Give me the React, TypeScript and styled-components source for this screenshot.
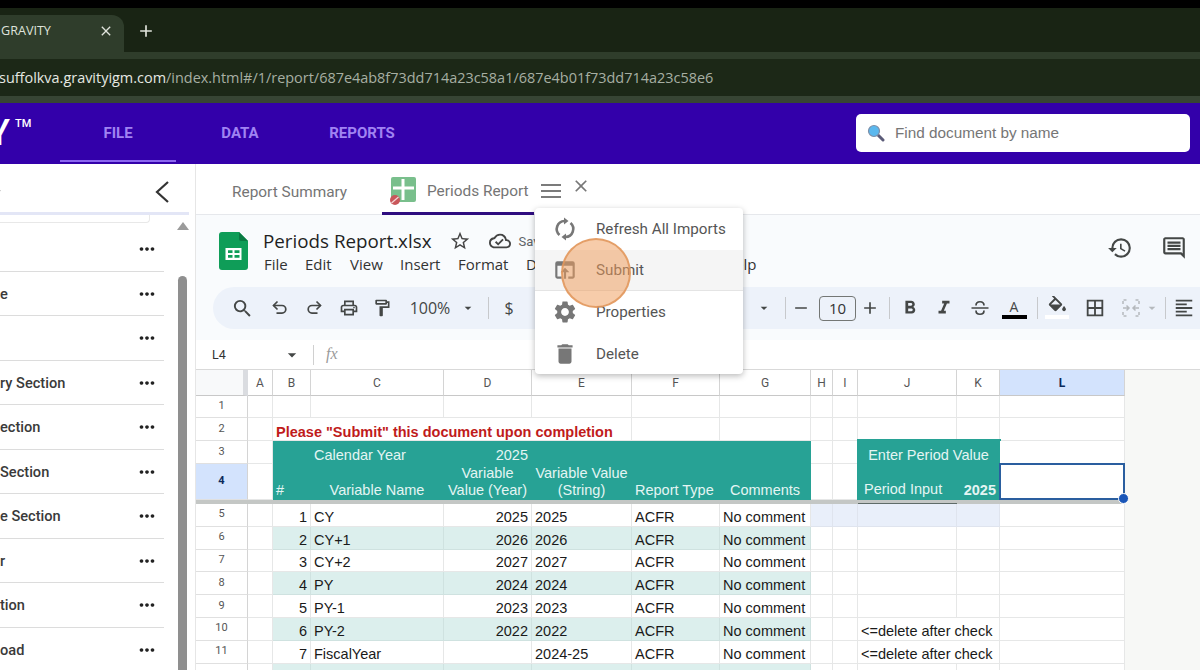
import React from "react";
import styled, { createGlobalStyle } from "styled-components";
import {
  MdArrowDropDown,
  MdAdd,
  MdBorderAll,
  MdClose,
  MdDelete,
  MdFormatAlignLeft,
  MdFormatBold,
  MdFormatItalic,
  MdHistory,
  MdMoreHoriz,
  MdOutlineCloudDone,
  MdOutlineComment,
  MdOutlineFormatPaint,
  MdOutlineLocalPrintshop,
  MdOutlineOpenInBrowser,
  MdRemove,
  MdSearch,
  MdSettings,
  MdStarBorder,
  MdExpandMore,
} from "react-icons/md";

const GlobalStyle = createGlobalStyle`
  html, body { margin: 0; padding: 0; background: #fff; }
  body { font-family: Roboto, "Liberation Sans", sans-serif; }
`;

const Page = styled.div`
  position: relative;
  width: 1200px;
  height: 670px;
  overflow: hidden;
  display: flex;
  flex-direction: column;
`;

/* browser chrome */
const BlackBar = styled.div`
  height: 8px;
  background: #000;
`;

const TabStrip = styled.div`
  height: 44px;
  background: #192414;
  display: flex;
  align-items: flex-end;
  color: #dfe3db;
`;

const BrowserTab = styled.div`
  width: 124px;
  height: 37px;
  background: #2f3d2b;
  border-top-right-radius: 12px;
  display: flex;
  align-items: center;
  justify-content: space-between;
  padding: 0 10px 6px 1px;
  box-sizing: border-box;
  font: 12.6px "Open Sans", sans-serif;
`;

const NewTab = styled.div`
  width: 44px;
  height: 37px;
  padding-bottom: 6px;
  box-sizing: border-box;
  display: flex;
  align-items: center;
  justify-content: center;
`;

const AddressWrap = styled.div`
  height: 51px;
  box-sizing: border-box;
  background: #1c2817;
  border-top: 7px solid #2f3d2b;
  border-bottom: 7px solid #374534;
  display: flex;
  align-items: center;
  overflow: hidden;
  font: 14.45px "Open Sans", sans-serif;
  color: #a7afa3;
  white-space: nowrap;
`;

const Host = styled.span`
  color: #e6e9e3;
  margin-left: -1px;
`;

/* purple app bar */
const AppBar = styled.header`
  height: 61px;
  background: #3300aa;
  display: flex;
  align-items: stretch;
  flex: none;
`;

const Logo = styled.div`
  flex: none;
  width: 72px;
  margin-left: -12px;
  color: #fff;
  font: 500 36px Roboto, sans-serif;
  display: flex;
  align-items: center;
  padding-bottom: 2px;
  box-sizing: border-box;
  sup {
    font-size: 11px;
    font-weight: 500;
    margin: -19px 0 0 5px;
  }
`;

const Nav = styled.nav`
  display: flex;
  gap: 6px;
`;

const NavItem = styled.div<{ $active?: boolean }>`
  width: 116px;
  height: 59px;
  display: flex;
  align-items: center;
  justify-content: center;
  box-sizing: border-box;
  font: 700 15px Roboto, sans-serif;
  color: #a083f2;
  padding-top: 3px;
  border-bottom: 2px solid ${(p) => (p.$active ? "#8b66ef" : "transparent")};
`;

const SearchBox = styled.div`
  margin: 11px 10px 0 auto;
  width: 334px;
  height: 38px;
  background: #fff;
  border-radius: 5px;
  display: flex;
  align-items: center;
  gap: 10px;
  padding-left: 11px;
  box-sizing: border-box;
  font: 15.3px "Liberation Sans", sans-serif;
  color: #767676;
`;

/* main area */
const Main = styled.div`
  flex: 1;
  display: flex;
  min-height: 0;
`;

const Sidebar = styled.aside`
  width: 196px;
  flex: none;
  box-sizing: border-box;
  border-right: 1px solid #e6e6e6;
  display: flex;
  flex-direction: column;
  background: #fff;
`;

const SideHead = styled.div`
  height: 51px;
  box-sizing: border-box;
  margin-right: 6px;
  border-bottom: 3px solid #e3e6f6;
  display: flex;
  align-items: center;
  justify-content: space-between;
  color: #333;
  padding: 7px 20px 0 0;
  overflow: hidden;
`;

const SideBody = styled.div`
  flex: 1;
  display: flex;
  min-height: 0;
`;

const SideList = styled.div`
  width: 164px;
  flex: none;
`;

const SearchStub = styled.div`
  width: 150px;
  height: 8px;
  box-sizing: border-box;
  border: 1px solid #e8e8e8;
  border-top: none;
  border-left: none;
  border-bottom-right-radius: 4px;
  margin-bottom: 4px;
`;

const SideRow = styled.div`
  height: 44.5px;
  box-sizing: border-box;
  border-bottom: 1px solid #dcdcdc;
  display: flex;
  align-items: center;
  justify-content: space-between;
  padding: 1px 6px 0 0;
  font: 500 14.6px Roboto, sans-serif;
  color: #3a3a3a;
  white-space: nowrap;
`;

const Dots = styled(MdMoreHoriz)`
  font-size: 22px;
  color: #222;
`;

const ScrollTrack = styled.div`
  margin-left: 14px;
  width: 9px;
  display: flex;
  flex-direction: column;
  align-items: center;
`;

const ScrollArrow = styled.div`
  margin-top: 7px;
  border-left: 6px solid transparent;
  border-right: 6px solid transparent;
  border-bottom: 8px solid #9b9b9b;
`;

const ScrollThumb = styled.div`
  margin-top: 46px;
  width: 9px;
  flex: 1;
  background: #8f8f8f;
  border-radius: 5px 5px 0 0;
`;

const Content = styled.section`
  flex: 1;
  min-width: 0;
  display: flex;
  flex-direction: column;
`;

const TabsBar = styled.div`
  height: 51px;
  box-sizing: border-box;
  border-bottom: 1px solid #e6e8ec;
  display: flex;
  font: 400 15.4px Roboto, sans-serif;
  color: #757575;
`;

const TabLabel = styled.div`
  margin-left: 36px;
  width: 150px;
  display: flex;
  align-items: center;
  padding-top: 5px;
  box-sizing: content-box;
`;

const ActiveTab = styled.div`
  width: 152px;
  height: 51px;
  box-sizing: border-box;
  border-bottom: 3px solid #2f0d80;
  display: flex;
  align-items: center;
  padding: 5px 0 0 8px;
  gap: 11px;
  white-space: nowrap;
`;

const TabMenu = styled.div`
  margin-left: 7px;
  padding-top: 20px;
  width: 20px;
  display: flex;
  flex-direction: column;
  gap: 4px;
  i {
    display: block;
    height: 2px;
    background: #7b7b7b;
  }
`;

const TabClose = styled(MdClose)`
  margin: 12px 0 0 10px;
  font-size: 20px;
  color: #777;
`;

/* spreadsheet chrome */
const DocChrome = styled.div`
  height: 125px;
  background: #f9fbfd;
  display: flex;
  flex-direction: column;
  flex: none;
`;

const DocHead = styled.div`
  height: 72px;
  display: flex;
  align-items: flex-start;
  padding: 17px 0 0 23px;
  box-sizing: border-box;
`;

const TitleCol = styled.div`
  margin-left: 15px;
  margin-top: -1px;
`;

const TitleRow = styled.div`
  display: flex;
  align-items: center;
  height: 20px;
  font: 18.8px "Open Sans", sans-serif;
  color: #1f1f1f;
  white-space: nowrap;
`;

const TitleIcon = styled.span<{ $ml: number }>`
  display: flex;
  margin-left: ${(p) => p.$ml}px;
  color: #444;
  font-size: 22px;
`;

const Saved = styled.span`
  font: 13px Roboto, sans-serif;
  color: #5f6368;
  margin-left: 7px;
`;

const MenuRow = styled.div`
  display: flex;
  margin: 3px 0 0 1px;
  font: 15px "Open Sans", sans-serif;
  color: #333;
`;

const MenuWord = styled.span<{ $w: number }>`
  width: ${(p) => p.$w}px;
  flex: none;
  white-space: nowrap;
`;

const DocActions = styled.div`
  margin: 3px 13px 0 auto;
  display: flex;
  gap: 28px;
  font-size: 26px;
  color: #444746;
`;

const Toolbar = styled.div`
  height: 42px;
  margin-left: 17px;
  padding-left: 15px;
  background: #edf2fa;
  border-radius: 21px 0 0 21px;
  display: flex;
  align-items: center;
  overflow: hidden;
  color: #444746;
  font-size: 20px;
`;

const Tool = styled.span<{ $ml?: number; $w?: number; $muted?: boolean }>`
  flex: none;
  width: ${(p) => p.$w ?? 28}px;
  margin-left: ${(p) => p.$ml ?? 0}px;
  height: 28px;
  display: flex;
  align-items: center;
  justify-content: center;
  color: ${(p) => (p.$muted ? "#b5b9bd" : "#444746")};
`;

const ToolText = styled(Tool)`
  font: 16px "Open Sans", sans-serif;
`;

const Sep = styled.span<{ $ml: number }>`
  flex: none;
  width: 1px;
  height: 22px;
  margin-left: ${(p) => p.$ml}px;
  background: #c7c9cc;
`;

const SizeBox = styled.span`
  flex: none;
  width: 37px;
  height: 25px;
  margin-left: 4px;
  box-sizing: border-box;
  border: 1px solid #747775;
  border-radius: 4px;
  display: flex;
  align-items: center;
  justify-content: center;
  font: 15px "Open Sans", sans-serif;
  color: #333;
`;

const TextColor = styled(Tool)`
  flex-direction: column;
  font: 14px "Open Sans", sans-serif;
  line-height: 17px;
  &::after {
    content: "";
    display: block;
    width: 25px;
    height: 4px;
    background: #000;
  }
`;

const FormulaBar = styled.div`
  height: 30px;
  box-sizing: border-box;
  background: #fff;
  border-bottom: 1px solid #d9d9d9;
  display: flex;
  align-items: center;
  padding-left: 16px;
  color: #444746;
  flex: none;
`;

const CellName = styled.span`
  width: 70px;
  font: 12.5px Roboto, sans-serif;
  color: #333;
`;

const Fx = styled.span`
  margin-left: 11px;
  padding-left: 12px;
  border-left: 1px solid #d0d0d0;
  height: 20px;
  line-height: 20px;
  font: italic 16px "Liberation Serif", serif;
  color: #9a9a9a;
`;

/* sheet grid */
const Sheet = styled.div`
  flex: 1;
  min-height: 0;
  overflow: hidden;
  display: grid;
  grid-template-columns: 52px 25px 38px 133px 88px 100px 88px 91px 22px 25px 99px 43px 125px 1fr;
  grid-template-rows: 26px 22px 23px 23px 36px 4px repeat(7, 22.8px) 30px;
  font: 14.5px "Liberation Sans", sans-serif;
  color: #1a1a1a;
`;

const Gutter = styled.div`
  background: #f8f9fa;
  border-right: 5px solid #dadce0;
  border-bottom: 1px solid #c8c8c8;
`;

const ColHead = styled.div<{ $active?: boolean }>`
  box-sizing: border-box;
  border-right: 1px solid #d4d4d4;
  border-bottom: 1px solid #c8c8c8;
  background: ${(p) => (p.$active ? "#d3e3fd" : "#fff")};
  display: flex;
  align-items: center;
  justify-content: center;
  font: ${(p) => (p.$active ? 700 : 400)} 12px Roboto, sans-serif;
  color: ${(p) => (p.$active ? "#0b2a5b" : "#555")};
`;

const RowHead = styled.div<{ $active?: boolean }>`
  box-sizing: border-box;
  border-right: 1px solid #d4d4d4;
  border-bottom: 1px solid #e0e0e0;
  background: ${(p) => (p.$active ? "#d3e3fd" : "#fff")};
  display: flex;
  align-items: center;
  justify-content: center;
  padding-bottom: 2px;
  font: ${(p) => (p.$active ? 700 : 400)} 11px Roboto, sans-serif;
  color: ${(p) => (p.$active ? "#0b2a5b" : "#555")};
`;

type Tone = "plain" | "band" | "teal" | "focus";
const toneBg: Record<Tone, string> = {
  plain: "#fff",
  band: "#dcefed",
  teal: "#27a295",
  focus: "#e9effa",
};
const toneLine: Record<Tone, string> = {
  plain: "#e6e7e7",
  band: "#cfe2e0",
  teal: "#27a295",
  focus: "#dfe4ee",
};

const Cell = styled.div<{ $tone?: Tone; $align?: string; $span?: number; $strong?: boolean; $center?: boolean; $tight?: boolean }>`
  box-sizing: border-box;
  position: relative;
  min-width: 0;
  padding: 0 3px 0 3px;
  display: flex;
  align-items: flex-end;
  line-height: ${(p) => (p.$tight ? 15 : 17)}px;
  white-space: nowrap;
  grid-column: span ${(p) => p.$span ?? 1};
  justify-content: ${(p) => p.$align ?? "flex-start"};
  text-align: ${(p) => (p.$center ? "center" : "left")};
  font-weight: ${(p) => (p.$strong ? 700 : 400)};
  background: ${(p) => toneBg[p.$tone ?? "plain"]};
  border-right: 1px solid ${(p) => toneLine[p.$tone ?? "plain"]};
  border-bottom: 1px solid ${(p) => toneLine[p.$tone ?? "plain"]};
  color: ${(p) => (p.$tone === "teal" ? "#e4f5f3" : "#1a1a1a")};
`;

const Warning = styled(Cell)`
  font-weight: 700;
  color: #c01b1b;
`;

const PeriodTitle = styled(Cell)`
  margin: -2px -1px 0 -1px;
`;

const PeriodLabel = styled(Cell)`
  padding: 0 0 1px 7px;
  margin-left: -1px;
`;

const Freeze = styled.div<{ $span: number; $dark?: boolean }>`
  grid-column: span ${(p) => p.$span};
  background: #c4c7c5;
  border-bottom: ${(p) => (p.$dark ? "1px solid #5f6b68" : "none")};
`;

const Blank = styled.div`
  background: #f7f8f6;
`;

const Selection = styled.div`
  position: absolute;
  inset: -1px -1px -1px -1px;
  border: 2px solid #2a5e9f;
`;

const SelectionHandle = styled.div`
  position: absolute;
  right: -6px;
  bottom: -6px;
  width: 9px;
  height: 9px;
  border-radius: 50%;
  background: #1a56b8;
  border: 1px solid #fff;
  z-index: 2;
`;

/* popup menu and click marker */
const PopMenu = styled.div`
  position: absolute;
  left: 535px;
  top: 208px;
  width: 208px;
  background: #fff;
  border-radius: 4px;
  box-shadow: 0 2px 6px rgba(0, 0, 0, 0.28);
  z-index: 5;
`;

const PopItem = styled.div<{ $hover?: boolean }>`
  height: 41.6px;
  box-sizing: border-box;
  display: flex;
  align-items: center;
  padding-top: 1px;
  font: 15.2px Roboto, sans-serif;
  color: #555;
  background: ${(p) => (p.$hover ? "#f5f5f5" : "transparent")};
  border-bottom: 1px solid ${(p) => (p.$hover ? "#e4e4e4" : "transparent")};
`;

const PopIcon = styled.span`
  width: 61px;
  display: flex;
  justify-content: center;
  padding-right: 2px;
  box-sizing: border-box;
  font-size: 26px;
  color: #777;
`;

const ClickMark = styled.div`
  position: absolute;
  left: 561px;
  top: 238px;
  width: 70px;
  height: 70px;
  box-sizing: border-box;
  border-radius: 50%;
  background: rgba(240, 158, 92, 0.52);
  border: 2px solid rgba(224, 150, 92, 0.85);
  z-index: 6;
`;

const MagnifierIcon = () => (
  <svg width="18" height="18" viewBox="0 0 18 18">
    <line x1="10.5" y1="10.5" x2="16" y2="16" stroke="#5b5b78" strokeWidth="3" strokeLinecap="round" />
    <circle cx="7" cy="7" r="5.5" fill="#5bb8ee" stroke="#7d8fa8" strokeWidth="1.2" />
  </svg>
);

const BackChevron = () => (
  <svg width="14" height="22" viewBox="0 0 14 22" fill="none" stroke="#333" strokeWidth="2.2">
    <path d="M13 1L2 11l11 10" />
  </svg>
);

const SheetsIcon = () => (
  <svg width="29" height="38" viewBox="0 0 29 38">
    <path d="M3 0h17l9 9v26a3 3 0 0 1-3 3H3a3 3 0 0 1-3-3V3a3 3 0 0 1 3-3z" fill="#0f9d58" />
    <path d="M20 0l9 9h-7a2 2 0 0 1-2-2z" fill="#0a7a43" />
    <path d="M6.500 16h16v12h-16z M9 18.200v2.800h4.500v-2.800z M15.500 18.200v2.800h5v-2.800z M9 23v2.800h4.500V23z M15.500 23v2.800h5V23z" fill="#fff" fillRule="evenodd" />
  </svg>
);

const TabSheetIcon = () => (
  <svg width="26" height="28" viewBox="0 0 26 28">
    <rect x="1" y="0" width="25" height="25" rx="2" fill="#79bf8c" />
    <path d="M13 2v21M3 11h21" stroke="#fff" strokeWidth="3" />
    <circle cx="5" cy="23" r="5" fill="#c9565a" />
    <path d="M1.500 26l7-6" stroke="#f3d7d7" strokeWidth="1.2" />
  </svg>
);

const UndoIcon = () => (
  <svg width="20" height="20" viewBox="0 0 20 20" fill="none" stroke="currentColor" strokeWidth="1.7">
    <path d="M7.500 3.500L3.500 7.500l4 4" />
    <path d="M3.500 7.500h8.500a3.800 3.800 0 0 1 0 7.600H6.500" />
  </svg>
);

const RedoIcon = () => (
  <svg width="20" height="20" viewBox="0 0 20 20" fill="none" stroke="currentColor" strokeWidth="1.7">
    <path d="M12.500 3.500l4 4-4 4" />
    <path d="M16.500 7.500H8a3.800 3.800 0 0 0 0 7.600h5.500" />
  </svg>
);

const StrikeIcon = () => (
  <svg width="20" height="20" viewBox="0 0 20 20" fill="none" stroke="currentColor" strokeWidth="1.7">
    <path d="M1.500 10h17" />
    <path d="M6 7.500c0-5 8-5 8 0" />
    <path d="M6 12.500c0 5 8 5 8 0" />
  </svg>
);

const FillIcon = () => (
  <svg width="24" height="24" viewBox="0 0 24 24">
    <g transform="translate(1 -1) scale(0.95)">
      <path
        fill="currentColor"
        d="M16.560 8.940L7.620 0 6.210 1.410l2.380 2.380-5.150 5.150c-.59.59-.59 1.540 0 2.120l5.500 5.500c.29.29.68.44 1.060.44s.77-.15 1.060-.44l5.500-5.500c.59-.58.59-1.530 0-2.120zM5.210 10L10 5.210 14.790 10H5.210zM19 11.500s-2 2.170-2 3.500c0 1.100.9 2 2 2s2-.9 2-2c0-1.330-2-3.500-2-3.500z"
      />
    </g>
    <rect x="0" y="19" width="24" height="4" fill="#fff" />
  </svg>
);

const MergeIcon = () => (
  <svg width="20" height="20" viewBox="0 0 20 20" fill="none" stroke="currentColor" strokeWidth="1.5">
    <path d="M2 6V2h5M18 6V2h-5M2 14v4h5M18 14v4h-5" strokeDasharray="3 1.500" />
    <path d="M2 10h6M5.500 7.500L8 10l-2.500 2.500M18 10h-6M14.500 7.500L12 10l2.500 2.500" />
  </svg>
);

const RefreshIcon = () => (
  <svg width="26" height="26" viewBox="0 0 26 26" fill="none" stroke="currentColor" strokeWidth="2.6">
    <path d="M12.500 5A8 8 0 0 0 7.500 19" />
    <path d="M13.500 21A8 8 0 0 0 18.500 7" />
    <path d="M12 1.500v7L16.500 5z" fill="currentColor" stroke="none" />
    <path d="M14 17.500v7L9.500 21z" fill="currentColor" stroke="none" />
  </svg>
);

const columns = ["A", "B", "C", "D", "E", "F", "G", "H", "I", "J", "K", "L"];

const rows = [
  { n: 1, name: "CY", year: "2025", text: "2025" },
  { n: 2, name: "CY+1", year: "2026", text: "2026" },
  { n: 3, name: "CY+2", year: "2027", text: "2027" },
  { n: 4, name: "PY", year: "2024", text: "2024" },
  { n: 5, name: "PY-1", year: "2023", text: "2023" },
  { n: 6, name: "PY-2", year: "2022", text: "2022" },
  { n: 7, name: "FiscalYear", year: "", text: "2024-25" },
];

const sideItems = ["", "e", "", "ry Section", "ection", "Section", "e Section", "r", "tion", "oad"];

const App: React.FC = () => {
  return (
    <Page>
      <GlobalStyle />
      <BlackBar />
      <TabStrip>
        <BrowserTab>
          GRAVITY
          <MdClose size={16} />
        </BrowserTab>
        <NewTab>
          <MdAdd size={20} />
        </NewTab>
      </TabStrip>
      <AddressWrap>
        <Host>suffolkva.gravityigm.com</Host>
        /index.html#/1/report/687e4ab8f73dd714a23c58a1/687e4b01f73dd714a23c58e6
      </AddressWrap>
      <AppBar>
        <Logo>
          Y<sup>TM</sup>
        </Logo>
        <Nav>
          <NavItem $active>FILE</NavItem>
          <NavItem>DATA</NavItem>
          <NavItem>REPORTS</NavItem>
        </Nav>
        <SearchBox>
          <MagnifierIcon />
          Find document by name
        </SearchBox>
      </AppBar>
      <Main>
        <Sidebar>
          <SideHead>
            <MdExpandMore size={14} style={{ marginLeft: -10 }} />
            <BackChevron />
          </SideHead>
          <SideBody>
            <SideList>
              <SearchStub />
              {sideItems.map((label, i) => (
                <SideRow key={i}>
                  <span>{label}</span>
                  <Dots />
                </SideRow>
              ))}
            </SideList>
            <ScrollTrack>
              <ScrollArrow />
              <ScrollThumb />
            </ScrollTrack>
          </SideBody>
        </Sidebar>
        <Content>
          <TabsBar>
            <TabLabel>Report Summary</TabLabel>
            <ActiveTab>
              <TabSheetIcon />
              Periods Report
            </ActiveTab>
            <TabMenu>
              <i />
              <i />
              <i />
            </TabMenu>
            <TabClose />
          </TabsBar>
          <DocChrome>
            <DocHead>
              <SheetsIcon />
              <TitleCol>
                <TitleRow>
                  Periods Report.xlsx
                  <TitleIcon $ml={18}>
                    <MdStarBorder />
                  </TitleIcon>
                  <TitleIcon $ml={18}>
                    <MdOutlineCloudDone />
                  </TitleIcon>
                  <Saved>Saved</Saved>
                </TitleRow>
                <MenuRow>
                  <MenuWord $w={41}>File</MenuWord>
                  <MenuWord $w={45}>Edit</MenuWord>
                  <MenuWord $w={50}>View</MenuWord>
                  <MenuWord $w={58}>Insert</MenuWord>
                  <MenuWord $w={68}>Format</MenuWord>
                  <MenuWord $w={198}>Data</MenuWord>
                  <MenuWord $w={30}>Help</MenuWord>
                </MenuRow>
              </TitleCol>
              <DocActions>
                <MdHistory />
                <MdOutlineComment />
              </DocActions>
            </DocHead>
            <Toolbar>
              <Tool><MdSearch size={23} /></Tool>
              <Tool $ml={10}><UndoIcon /></Tool>
              <Tool $ml={6}><RedoIcon /></Tool>
              <Tool $ml={7}><MdOutlineLocalPrintshop /></Tool>
              <Tool $ml={5}><MdOutlineFormatPaint /></Tool>
              <ToolText $ml={13} $w={42}>100%</ToolText>
              <Tool $ml={9} $w={16}><MdArrowDropDown size={24} /></Tool>
              <Sep $ml={12} />
              <ToolText $ml={6}>$</ToolText>
              <Tool $ml={233} $w={16}><MdArrowDropDown size={24} /></Tool>
              <Sep $ml={13} />
              <Tool $ml={1}><MdRemove /></Tool>
              <SizeBox>10</SizeBox>
              <Tool><MdAdd /></Tool>
              <Sep $ml={5} />
              <Tool $ml={6}><MdFormatBold size={22} /></Tool>
              <Tool $ml={6}><MdFormatItalic size={22} /></Tool>
              <Tool $ml={8}><StrikeIcon /></Tool>
              <TextColor $ml={6}>A</TextColor>
              <Sep $ml={9} />
              <Tool $ml={5}><FillIcon /></Tool>
              <Tool $ml={10}><MdBorderAll size={22} /></Tool>
              <Tool $ml={8} $muted><MergeIcon /></Tool>
              <Tool $ml={-1} $w={16} $muted><MdArrowDropDown size={22} /></Tool>
              <Sep $ml={5} />
              <Tool $ml={4}><MdFormatAlignLeft size={22} /></Tool>
            </Toolbar>
          </DocChrome>
          <FormulaBar>
            <CellName>L4</CellName>
            <MdArrowDropDown size={20} />
            <Fx>fx</Fx>
          </FormulaBar>
          <Sheet>
            <Gutter />
            {columns.map((c) => (
              <ColHead key={c} $active={c === "L"}>{c}</ColHead>
            ))}
            <Blank />

            <RowHead>1</RowHead>
            {columns.map((c) => <Cell key={c} />)}
            <Blank />

            <RowHead>2</RowHead>
            <Cell />
            <Warning $span={4} $tight>Please "Submit" this document upon completion</Warning>
            {columns.slice(5).map((c) => <Cell key={c} />)}
            <Blank />

            <RowHead>3</RowHead>
            <Cell />
            <Cell $tone="teal" />
            <Cell $tone="teal" $tight>Calendar Year</Cell>
            <Cell $tone="teal" $align="flex-end" $tight>2025</Cell>
            <Cell $tone="teal" />
            <Cell $tone="teal" />
            <Cell $tone="teal" />
            <Cell />
            <Cell />
            <PeriodTitle $tone="teal" $span={2} $align="center" $tight>Enter Period Value</PeriodTitle>
            <Cell />
            <Blank />

            <RowHead $active>4</RowHead>
            <Cell />
            <Cell $tone="teal">#</Cell>
            <Cell $tone="teal" $align="center">Variable Name</Cell>
            <Cell $tone="teal" $align="center" $center>Variable<br />Value (Year)</Cell>
            <Cell $tone="teal" $align="center" $center>Variable Value<br />(String)</Cell>
            <Cell $tone="teal">Report Type</Cell>
            <Cell $tone="teal" $align="center">Comments</Cell>
            <Cell />
            <Cell />
            <PeriodLabel $tone="teal">Period Input</PeriodLabel>
            <Cell $tone="teal" $align="flex-end" $strong>2025</Cell>
            <Cell>
              <Selection>
                <SelectionHandle />
              </Selection>
            </Cell>
            <Blank />

            <Freeze $span={10} />
            <Freeze $span={1} $dark />
            <Freeze $span={2} />
            <Blank />

            {rows.map((r, i) => {
              const tone: Tone = i % 2 === 1 ? "band" : "plain";
              return (
                <React.Fragment key={r.n}>
                  <RowHead>{r.n + 4}</RowHead>
                  <Cell />
                  <Cell $tone={tone} $align="flex-end">{r.n}</Cell>
                  <Cell $tone={tone}>{r.name}</Cell>
                  <Cell $tone={tone} $align="flex-end">{r.year}</Cell>
                  <Cell $tone={tone}>{r.text}</Cell>
                  <Cell $tone={tone}>ACFR</Cell>
                  <Cell $tone={tone}>No comment</Cell>
                  <Cell $tone={i === 0 ? "focus" : "plain"} />
                  <Cell $tone={i === 0 ? "focus" : "plain"} />
                  {r.n >= 6 ? (
                    <Cell $span={2}>&lt;=delete after check</Cell>
                  ) : (
                    <>
                      <Cell $tone={i === 0 ? "focus" : "plain"} />
                      <Cell $tone={i === 0 ? "focus" : "plain"} />
                    </>
                  )}
                  <Cell />
                  <Blank />
                </React.Fragment>
              );
            })}

            <RowHead>12</RowHead>
            <Cell />
            {columns.slice(1, 7).map((c) => <Cell key={c} $tone="band" />)}
            {columns.slice(7).map((c) => <Cell key={c} />)}
            <Blank />
          </Sheet>
        </Content>
      </Main>
      <PopMenu>
        <PopItem>
          <PopIcon><RefreshIcon /></PopIcon>
          Refresh All Imports
        </PopItem>
        <PopItem $hover>
          <PopIcon><MdOutlineOpenInBrowser /></PopIcon>
          Submit
        </PopItem>
        <PopItem>
          <PopIcon><MdSettings /></PopIcon>
          Properties
        </PopItem>
        <PopItem>
          <PopIcon><MdDelete /></PopIcon>
          Delete
        </PopItem>
      </PopMenu>
      <ClickMark />
    </Page>
  );
};

export default App;
